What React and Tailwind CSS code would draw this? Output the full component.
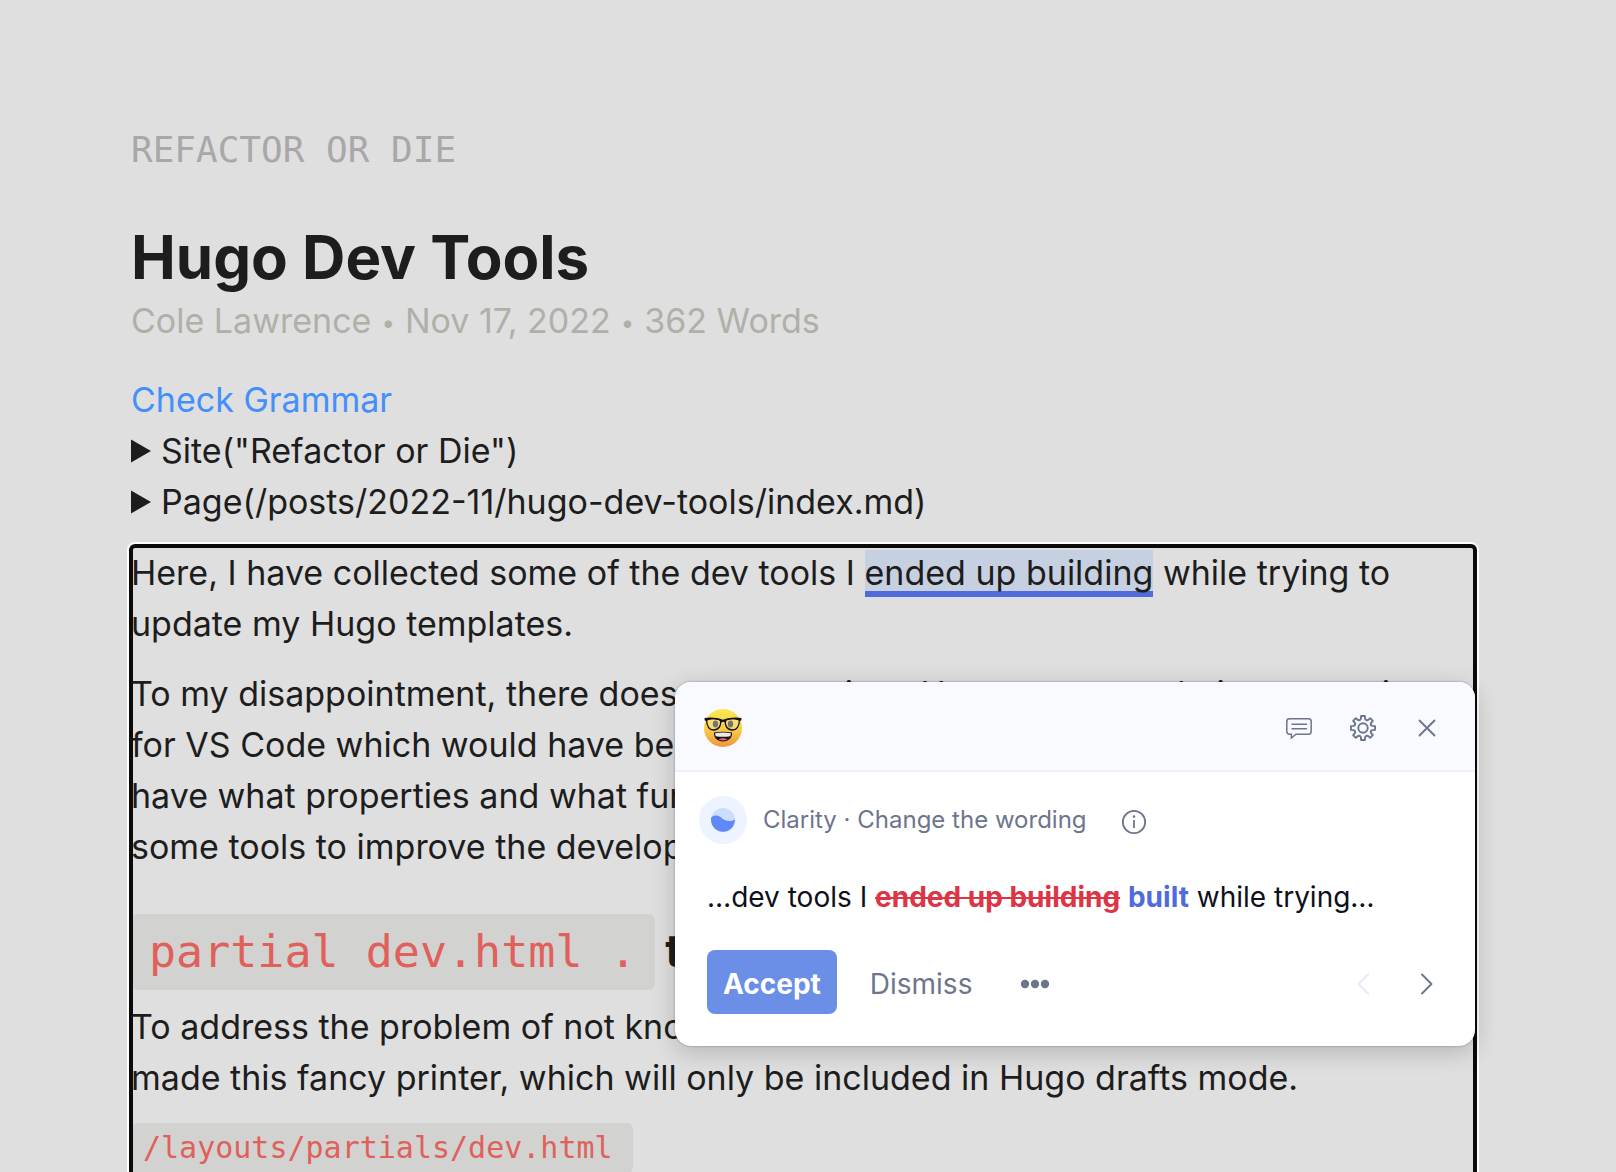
import React from "react";

function cogPath(teeth, outer, inner) {
  const step = 360 / teeth;
  const at = (r, deg) => {
    const a = ((deg - 90) * Math.PI) / 180;
    return `${(14 + r * Math.cos(a)).toFixed(2)} ${(14 + r * Math.sin(a)).toFixed(2)}`;
  };
  let d = "";
  for (let i = 0; i < teeth; i++) {
    const c = i * step;
    d += `${i ? "L" : "M"}${at(inner, c - 13)}L${at(outer, c - 9)}L${at(outer, c + 9)}L${at(inner, c + 13)}`;
    d += `Q${at(inner - 1.6, c + step / 2)} ${at(inner, c + step - 13)}`;
  }
  return d + "Z";
}

const COG = cogPath(8, 12.2, 9.4);

function Triangle() {
  return (
    <svg width="20" height="24" viewBox="0 0 20 24" fill="currentColor" aria-hidden="true">
      <path d="M0 0.5L20 12L0 23.5Z" />
    </svg>
  );
}

function NerdFace() {
  return (
    <svg width="38" height="38" viewBox="0 0 38 38" role="img" aria-label="Nerd face">
      <defs>
        <linearGradient id="face" x1="0" y1="0" x2="0" y2="1">
          <stop offset="0" stopColor="#fbe94f" />
          <stop offset="0.5" stopColor="#f8cf48" />
          <stop offset="1" stopColor="#f0953a" />
        </linearGradient>
      </defs>
      <circle cx="19" cy="19" r="19" fill="url(#face)" />
      <ellipse cx="11.5" cy="15" rx="2.7" ry="3.4" fill="#54504f" />
      <ellipse cx="26.5" cy="15" rx="2.7" ry="3.4" fill="#54504f" />
      <path d="M2.5 10.5C6 9 13 9.3 16.5 11C17.5 17 14.5 21 9.5 21C5 21 2.8 17 2.5 10.5Z" fill="#fff" fillOpacity="0.2" stroke="#15121d" strokeWidth="1.3" />
      <path d="M35.5 10.5C32 9 25 9.3 21.5 11C20.5 17 23.5 21 28.5 21C33 21 35.2 17 35.5 10.5Z" fill="#fff" fillOpacity="0.2" stroke="#15121d" strokeWidth="1.3" />
      <path d="M0.5 9C6 7.8 13 8.6 19 10.8C25 8.6 32 7.8 37.5 9L37.3 11.5L35.5 12C32 9.8 25 9.8 21.8 12L20.8 13.5Q19 12 17.2 13.5L16.2 12C13 9.8 6 9.8 2.5 12L0.7 11.5Z" fill="#15121d" />
      <path d="M10 23.5Q19 22 28 23.5C28.5 29 24.5 32.5 19 32.5C13.5 32.5 9.5 29 10 23.5Z" fill="#15121d" />
      <path d="M11 24.2Q19 22.8 27 24.2L26.3 27.2Q19 28.2 11.7 27.2Z" fill="#eceae6" />
      <path d="M14.5 30.5Q19 27.5 23.5 30.5Q19 32.6 14.5 30.5Z" fill="#e8606c" />
    </svg>
  );
}

function CommentIcon() {
  return (
    <svg width="28" height="28" viewBox="0 0 28 28" fill="none" stroke="currentColor" strokeWidth="1.5" aria-hidden="true">
      <path d="M4.5 4.7H23.5Q26.2 4.7 26.2 7.4V17.5Q26.2 20.2 23.5 20.2H11L6.4 24V20.2H4.5Q1.8 20.2 1.8 17.5V7.4Q1.8 4.7 4.5 4.7Z" />
      <path d="M7 10.3H21.5M7 14.7H21.5" strokeLinecap="round" />
    </svg>
  );
}

function CogIcon() {
  return (
    <svg width="28" height="28" viewBox="0 0 28 28" fill="none" stroke="currentColor" strokeWidth="1.9" strokeLinejoin="round" aria-hidden="true">
      <path d={COG} />
      <circle cx="14" cy="14" r="4.7" />
    </svg>
  );
}

function CloseIcon() {
  return (
    <svg width="28" height="28" viewBox="0 0 28 28" fill="none" stroke="currentColor" strokeWidth="1.9" strokeLinecap="round" aria-hidden="true">
      <path d="M6.5 6.5L21.5 21.5M21.5 6.5L6.5 21.5" />
    </svg>
  );
}

function ClarityBadge() {
  return (
    <svg width="48" height="48" viewBox="0 0 48 48" aria-hidden="true">
      <circle cx="24" cy="24" r="24" fill="#edf4ff" />
      <circle cx="24" cy="24" r="12" fill="#cbdefd" />
      <path d="M12.2 21.5C14 19 18.5 18.7 22 21.5C26 24.8 30 26.5 36 23.5A12 12 0 1 1 12.2 21.5Z" fill="#6089f7" />
    </svg>
  );
}

function InfoIcon() {
  return (
    <svg width="26" height="26" viewBox="0 0 26 26" fill="none" stroke="currentColor" aria-hidden="true">
      <circle cx="13" cy="13" r="11.2" strokeWidth="1.8" />
      <path d="M13 11V19" strokeWidth="1.8" />
      <circle cx="13" cy="7.5" r="1.3" fill="currentColor" stroke="none" />
    </svg>
  );
}

function Chevron({ d }) {
  return (
    <svg width="28" height="28" viewBox="0 0 28 28" fill="none" stroke="currentColor" strokeWidth="1.9" strokeLinecap="round" strokeLinejoin="round" aria-hidden="true">
      <path d={d} />
    </svg>
  );
}

function DevNode({ children }) {
  return (
    <details>
      <summary className="flex list-none items-center gap-[10px]">
        <Triangle />
        {children}
      </summary>
    </details>
  );
}

function Dot() {
  return <span className="mx-[10px] align-[2px] text-[24px] leading-none">•</span>;
}

function SuggestionCard() {
  return (
    <section
      aria-label="Writing suggestion"
      className="absolute top-[136px] right-0 w-[800px] overflow-hidden rounded-2xl bg-white text-[#6d758d] shadow-[0_0_2px_rgba(0,0,0,0.4),0_6px_24px_rgba(14,16,26,0.2)]"
    >
      <header className="flex h-[90px] items-center justify-between border-b-2 border-[#eef0fa] bg-[#f9faff] pt-1 pr-[34px] pl-[29px]">
        <NerdFace />
        <div className="flex gap-9">
          <button type="button" aria-label="Feedback"><CommentIcon /></button>
          <button type="button" aria-label="Settings"><CogIcon /></button>
          <button type="button" aria-label="Close"><CloseIcon /></button>
        </div>
      </header>
      <div className="flex items-center pt-6 pl-6">
        <ClarityBadge />
        <span className="ml-4 text-[24px] leading-[48px]">Clarity · Change the wording</span>
        <button type="button" aria-label="More about this suggestion" className="ml-[34px] pt-1"><InfoIcon /></button>
      </div>
      <p className="mt-8 pl-8 text-[28px] leading-[42px] whitespace-nowrap text-[#0e101a]">
        …dev tools I <del className="font-bold text-[#dc3545] decoration-2">ended up building</del>{" "}
        <ins className="font-bold text-[#4f6bdc] no-underline">built</ins> while trying…
      </p>
      <div className="mt-8 flex items-center pr-[34px] pb-8 pl-8 text-[28px]">
        <button type="button" className="h-16 rounded-lg bg-[#6b8ee6] px-4 pt-1 font-bold text-white">Accept</button>
        <button type="button" className="ml-[33px] pt-1">Dismiss</button>
        <button type="button" aria-label="More options" className="ml-12 pt-1">
          <svg width="30" height="10" viewBox="0 0 30 10" fill="currentColor" aria-hidden="true">
            <circle cx="5" cy="5" r="4.2" />
            <circle cx="15" cy="5" r="4.2" />
            <circle cx="25" cy="5" r="4.2" />
          </svg>
        </button>
        <div className="ml-auto flex gap-9 pt-1">
          <button type="button" aria-label="Previous" disabled className="text-[#e6e8f3]"><Chevron d="M19 4.5L9.5 14L19 23.5" /></button>
          <button type="button" aria-label="Next"><Chevron d="M9 4.5L18.500 14L9 23.5" /></button>
        </div>
      </div>
    </section>
  );
}

export default function App() {
  return (
    <div className="h-screen overflow-hidden bg-[#dfdfdf] pt-[124px] pr-[141px] pl-[131px] font-['Inter',sans-serif] text-[34px] leading-[51px] text-[#1d1d1d]">
      <header>
        <p className="font-['DejaVu_Sans_Mono',monospace] text-[36px] text-[#a8a8a8]">REFACTOR OR DIE</p>
        <h1 className="mt-11 text-[60px] leading-[76px] font-bold">Hugo Dev Tools</h1>
        <p className="text-[#b0b0a9]">
          Cole Lawrence<Dot />Nov 17, 2022<Dot />362 Words
        </p>
      </header>
      <nav className="mt-7">
        <a href="#grammar" className="text-[#448ffb]">Check Grammar</a>
        <DevNode>Site("Refactor or Die")</DevNode>
        <DevNode>Page(/posts/2022-11/hugo-dev-tools/index.md)</DevNode>
      </nav>
      <article className="relative mt-[19px] h-full rounded-sm pt-px whitespace-nowrap shadow-[0_0_0_4px_#fff] outline-4 -outline-offset-2 outline-[#0b0b0b]">
        <p>
          Here, I have collected some of the dev tools I{" "}
          <mark className="bg-[linear-gradient(to_top,#4f6bdc_6px,#c7d0e0_6px)] pt-[2px] pb-1 text-inherit">ended up building</mark> while trying to
          <br />
          update my Hugo templates.
        </p>
        <p className="mt-[19px]">
          To my disappointment, there does not yet exist a Hugo autocompletion extension
          <br />
          for VS Code which would have been able to
          <br />
          have what properties and what functions
          <br />
          some tools to improve the developer experience.
        </p>
        <h2 className="mt-[41px] text-[45px] leading-[76px] font-bold">
          <code className="inline-block rounded-md bg-[#d2d2d0] px-[18px] font-['DejaVu_Sans_Mono',monospace] font-normal text-[#e0605b]">partial dev.html .</code>{" "}
          tool
        </h2>
        <p className="mt-[11px]">
          To address the problem of not known values, I
          <br />
          made this fancy printer, which will only be included in Hugo drafts mode.
        </p>
        <code className="mt-[20px] inline-block rounded-md bg-[#d2d2d0] pr-5 pl-3 font-['DejaVu_Sans_Mono',monospace] text-[30px] leading-[50px] text-[#e0605b]">
          /layouts/partials/dev.html
        </code>
        <SuggestionCard />
      </article>
    </div>
  );
}
